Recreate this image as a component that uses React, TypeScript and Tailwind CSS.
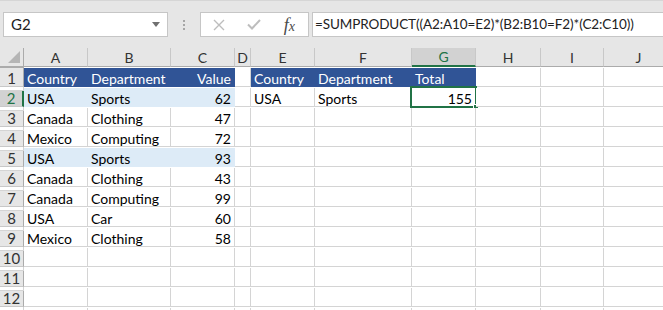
import React from "react";

const COLS = ["A", "B", "C", "D", "E", "F", "G", "H", "I", "J"];
const GRID = "grid grid-cols-[24px_64px_83px_64px_16px_64px_97px_64px_65px_63px_70px]";

type Cell = { v?: string; num?: boolean; fill?: "head" | "band" };

const HEAD: Cell = { fill: "head" };

function row(a: string, b: string, c: string, band = false): Cell[] {
  const fill = band ? ("band" as const) : undefined;
  return [{ v: a, fill }, { v: b, fill }, { v: c, num: true, fill }];
}

const DATA: Cell[][] = [
  [
    { ...HEAD, v: "Country" },
    { ...HEAD, v: "Department" },
    { ...HEAD, v: "Value", num: true },
    {},
    { ...HEAD, v: "Country" },
    { ...HEAD, v: "Department" },
    { ...HEAD, v: "Total" },
  ],
  [...row("USA", "Sports", "62", true), {}, { v: "USA" }, { v: "Sports" }, { v: "155", num: true }],
  row("Canada", "Clothing", "47"),
  row("Mexico", "Computing", "72"),
  row("USA", "Sports", "93", true),
  row("Canada", "Clothing", "43"),
  row("Canada", "Computing", "99"),
  row("USA", "Car", "60"),
  row("Mexico", "Clothing", "58"),
  [],
  [],
  [],
  [],
];

function fillClass(c: Cell) {
  if (c.fill === "head") return "bg-[#305496] border-[#305496] text-white";
  if (c.fill === "band") return "bg-[#ddebf7] border-[#ddebf7] text-black";
  return "bg-white border-[#d4d4d4] text-black";
}

function CrossIcon() {
  return (
    <svg width="12" height="12" viewBox="0 0 12 12">
      <path d="M1 1 L11 11 M11 1 L1 11" stroke="#bdbdbd" strokeWidth="1.4" fill="none" />
    </svg>
  );
}

function CheckIcon() {
  return (
    <svg width="14" height="11" viewBox="0 0 14 11">
      <path d="M1 5.5 L5 9.5 L13 1" stroke="#bdbdbd" strokeWidth="2" fill="none" />
    </svg>
  );
}

export default function App() {
  return (
    <div className="w-[663px] h-[310px] overflow-hidden bg-white font-['Lato',sans-serif] text-[14px] leading-none">
      {/* formula bar */}
      <div className="h-[48px] bg-[#e6e6e6] pt-[12px] pl-[3px] flex items-start border-t border-[#d6d6d6]">
        <div className="w-[165px] h-[25px] bg-white border border-[#c6c6c6] flex items-center pl-[7px] pr-[7px] -mt-px">
          <span className="flex-1 text-[#222] text-[15px]">G2</span>
          <svg width="8" height="5" viewBox="0 0 8 5">
            <path d="M0 0 H8 L4 5 Z" fill="#707070" />
          </svg>
        </div>
        <div className="w-[32px] h-[25px] flex flex-col items-center justify-center gap-[2px] -mt-px">
          <span className="w-[2px] h-[2px] bg-[#a6a6a6]" />
          <span className="w-[2px] h-[2px] bg-[#a6a6a6]" />
          <span className="w-[2px] h-[2px] bg-[#a6a6a6]" />
        </div>
        <div className="w-[109px] h-[25px] bg-white border border-[#c6c6c6] flex items-center -mt-px">
          <span className="w-[37px] flex justify-center"><CrossIcon /></span>
          <span className="w-[34px] flex justify-center"><CheckIcon /></span>
          <span className="w-[38px] flex justify-center items-baseline font-['Liberation_Serif',serif] italic text-[#4a4a4a] text-[18px]">
            f<span className="text-[14px]">x</span>
          </span>
        </div>
        <div className="flex-1 h-[25px] ml-[3px] -mr-[4px] bg-white border border-[#c6c6c6] flex items-center pl-[2px] pt-[1px] text-[#222] text-[13.5px] tracking-[-0.1px] whitespace-nowrap -mt-px">
          =SUMPRODUCT((A2:A10=E2)*(B2:B10=F2)*(C2:C10))
        </div>
      </div>

      {/* column headers */}
      <div className={`${GRID} h-[20px]`}>
        <div className="bg-[#e6e6e6] border-r border-b border-[#ababab] relative">
          <svg className="absolute right-[3px] bottom-[3px]" width="12" height="12" viewBox="0 0 12 12">
            <path d="M12 0 V12 H0 Z" fill="#b5b5b5" />
          </svg>
        </div>
        {COLS.map((c) => {
          const sel = c === "G";
          return (
            <div
              key={c}
              className={`flex items-center justify-center pt-[2px] border-r border-[#c8c8c8] ${
                sel
                  ? "bg-[#d2d2d2] text-[#217346] border-b-2 border-b-[#217346]"
                  : "bg-[#e6e6e6] text-[#333] border-b border-b-[#ababab]"
              }`}
            >
              {c}
            </div>
          );
        })}
        <div className="bg-[#e6e6e6] border-b border-[#ababab]" />
      </div>

      {/* rows */}
      {DATA.map((cells, r) => {
        const selRow = r === 1;
        return (
          <div key={r} className={`${GRID} h-[20px]`}>
            <div
              className={`flex items-center justify-center pt-[3px] border-b border-[#c8c8c8] text-[15px] ${
                selRow
                  ? "bg-[#d2d2d2] text-[#217346] border-r-2 border-r-[#217346]"
                  : "bg-[#e6e6e6] text-[#333] border-r border-r-[#ababab]"
              }`}
            >
              {r < 12 ? r + 1 : ""}
            </div>
            {Array.from({ length: 11 }).map((_, ci) => {
              const c = cells[ci] ?? {};
              const active = r === 1 && ci === 6;
              return (
                <div
                  key={ci}
                  className={`relative flex items-center border-r border-b px-[3px] pt-[3px] whitespace-nowrap ${fillClass(c)} ${
                    c.num ? "justify-end" : "justify-start"
                  }`}
                >
                  {c.v}
                  {active && (
                    <>
                      <div className="absolute -left-[2px] -top-[2px] w-[67px] h-[22px] border-2 border-[#217346]" />
                      <div className="absolute -right-[4px] -bottom-[4px] w-[6px] h-[6px] bg-[#217346] border border-white" />
                    </>
                  )}
                </div>
              );
            })}
          </div>
        );
      })}
    </div>
  );
}
